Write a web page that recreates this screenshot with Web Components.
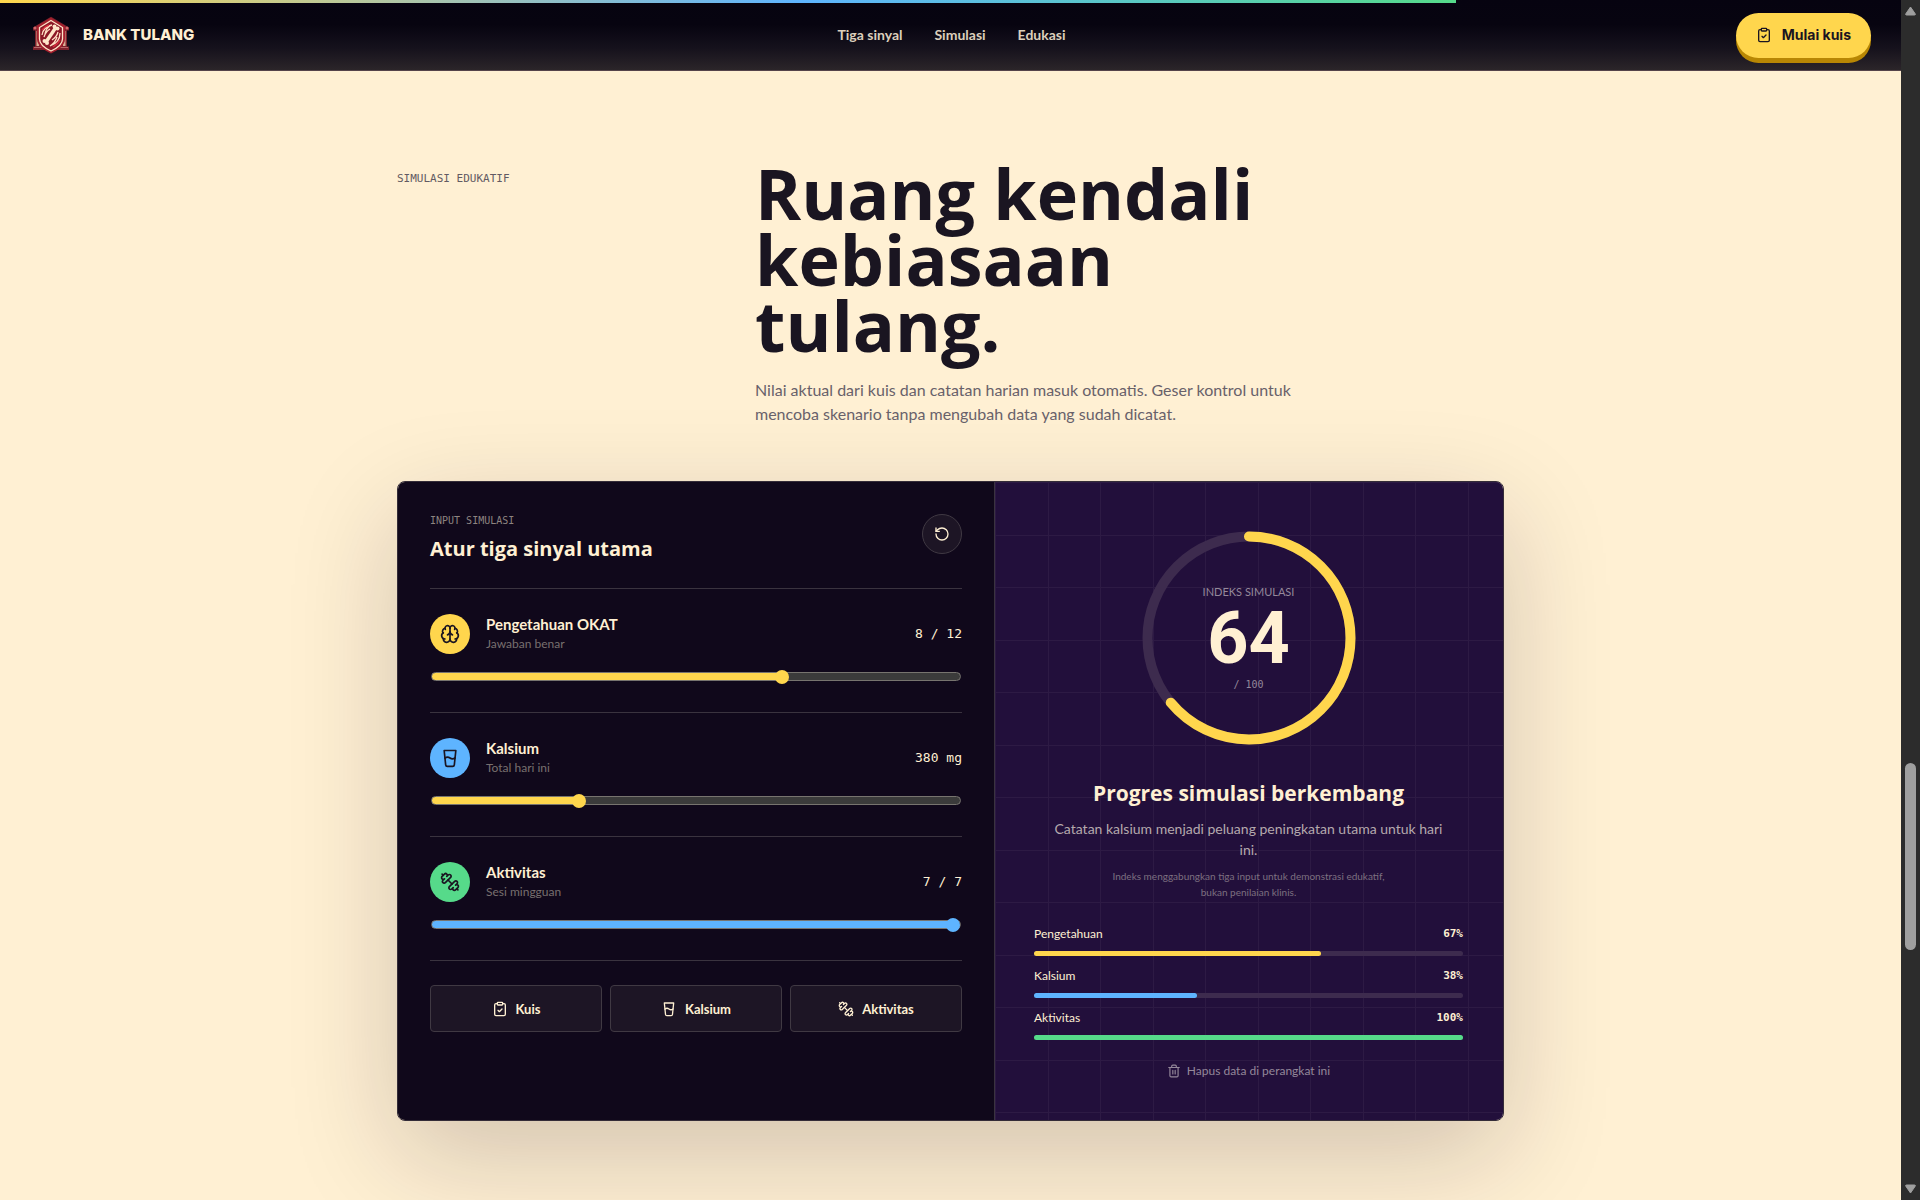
<!DOCTYPE html>
<html lang="id">
<head>
<meta charset="utf-8">
<meta name="viewport" content="width=device-width, initial-scale=1">
<title>Bank Tulang</title>
<style>
  :root {
    --cream: #fff0d3;
    --ink: #1a1521;
    --night: #10081b;
    --plum: #220f3b;
    --yellow: #ffd64d;
    --blue: #5eb4ff;
    --green: #56da8a;
    --line: #3a333f;
    --display: "Open Sans", "Noto Sans", sans-serif;
    --mono: "DejaVu Sans Mono", "Liberation Mono", monospace;
  }
  * { box-sizing: border-box; }
  body {
    margin: 0;
    background: var(--cream);
    color: var(--ink);
    font: 400 14px/20px Lato, "Open Sans", sans-serif;
  }
</style>
</head>
<body>
<bt-shell></bt-shell>

<script>
const ICONS = {
  clipboard: '<rect x="8" y="2" width="8" height="4" rx="1"/><path d="M16 4h2a2 2 0 0 1 2 2v14a2 2 0 0 1-2 2H6a2 2 0 0 1-2-2V6a2 2 0 0 1 2-2h2"/><path d="m9 14 2 2 4-4"/>',
  brain: '<path d="M12 18V5"/><path d="M15 13a4.17 4.17 0 0 1-3-4 4.17 4.17 0 0 1-3 4"/><path d="M17.598 6.5A3 3 0 1 0 12 5a3 3 0 1 0-5.598 1.5"/><path d="M17.997 5.125a4 4 0 0 1 2.526 5.77"/><path d="M18 18a4 4 0 0 0 2-7.464"/><path d="M19.967 17.483A4 4 0 1 1 12 18a4 4 0 1 1-7.967-.517"/><path d="M6 18a4 4 0 0 1-2-7.464"/><path d="M6.003 5.125a4 4 0 0 0-2.526 5.77"/>',
  glass: '<path d="M15.2 22H8.8a2 2 0 0 1-2-1.79L5 3h14l-1.81 17.21A2 2 0 0 1 15.2 22Z"/><path d="M6 12a5 5 0 0 1 6 0 5 5 0 0 0 6 0"/>',
  dumbbell: '<path d="M14.4 14.4 9.6 9.6"/><path d="M18.657 21.485a2 2 0 1 1-2.829-2.828l-1.767 1.768a2 2 0 1 1-2.829-2.829l6.364-6.364a2 2 0 1 1 2.829 2.829l-1.768 1.767a2 2 0 1 1 2.828 2.829z"/><path d="m21.5 21.5-1.4-1.4"/><path d="M3.9 3.9 2.5 2.5"/><path d="M6.404 12.768a2 2 0 1 1-2.829-2.829l1.768-1.767a2 2 0 1 1-2.828-2.829l2.828-2.828a2 2 0 1 1 2.829 2.828l1.767-1.768a2 2 0 1 1 2.829 2.829z"/>',
  reset: '<path d="M3 12a9 9 0 1 0 9-9 9.75 9.75 0 0 0-6.74 2.74L3 8"/><path d="M3 3v5h5"/>',
  trash: '<path d="M3 6h18"/><path d="M19 6v14a2 2 0 0 1-2 2H7a2 2 0 0 1-2-2V6"/><path d="M8 6V4a2 2 0 0 1 2-2h4a2 2 0 0 1 2 2v2"/><path d="M10 11v6M14 11v6"/>'
};

const BASE = '*{box-sizing:border-box}button{font:inherit;color:inherit;margin:0;cursor:pointer}';

class Base extends HTMLElement {
  connectedCallback() {
    if (this.shadowRoot) return;
    this.attachShadow({ mode: 'open' }).innerHTML = '<style>' + BASE + this.styles() + '</style>' + this.markup();
  }
  at(name) { return this.getAttribute(name) || ''; }
  styles() { return ''; }
  markup() { return ''; }
}

customElements.define('bt-icon', class extends Base {
  styles() { return `:host{display:block;flex:none;width:var(--size,16px);height:var(--size,16px)}svg{display:block;width:100%;height:100%}`; }
  markup() {
    return `<svg viewBox="0 0 24 24" fill="none" stroke="currentColor" stroke-width="2" stroke-linecap="round" stroke-linejoin="round" aria-hidden="true">${ICONS[this.at('name')]}</svg>`;
  }
});

customElements.define('bt-logo', class extends Base {
  styles() { return `:host{display:block;flex:none;width:38px;height:38px}svg{display:block}`; }
  markup() {
    return `<svg width="38" height="38" viewBox="0 0 38 38" aria-hidden="true">
      <path d="M1 11.500 19 .8 37 11.500v3h-2v16h2v3.500H1v-3.500h2v-16H1z" fill="#7d222c"/>
      <path d="M4.500 15h2.500v15H4.500zM31 15h2.500v15H31z" fill="#d9ae94"/>
      <path d="M2 31.500h8M28 31.500h8" stroke="#b86668" stroke-width="1.200"/>
      <circle cx="3" cy="12" r="1.500" fill="#d4696c"/><circle cx="35" cy="12" r="1.500" fill="#d4696c"/>
      <path d="M19 1.800 33 10v13c0 6-6 11-14 14.500C11 34 5 29 5 23V10z" fill="#a51f2d"/>
      <path d="M19 4.500 30.500 11.500v11.500c0 5-5 9-11.500 12C12.500 32 7.500 28 7.500 23V11.500z" fill="#8c1826" stroke="#ffe6c9" stroke-width="1.300"/>
      <path d="M14 26 23.500 12" stroke="#ffe6c9" stroke-width="3.500"/>
      <circle cx="22.500" cy="10.500" r="2" fill="#ffe6c9"/><circle cx="25.500" cy="12.500" r="2" fill="#ffe6c9"/>
      <circle cx="12.500" cy="25" r="2" fill="#ffe6c9"/><circle cx="15" cy="27" r="2" fill="#ffe6c9"/>
      <path d="M10 19c1-6 5-9 10-10-5 2-6 5-7 9M12 21c1-4 3-6 6-8M28 17c0 7-4 11-10 13 5-3 6-6 7-9M26 16c-1 4-3 6-6 8" fill="none" stroke="#ffdfc4" stroke-width="1.300"/>
      <path d="M10 14c2-3 4-4 7-5M28 24c-2 4-4 5-7 7" fill="none" stroke="#d52d3c" stroke-width="1.400"/>
    </svg>`;
  }
});

customElements.define('bt-header', class extends Base {
  styles() { return `
    :host{display:block;position:relative}
    header{display:grid;grid-template-columns:1fr auto 1fr;align-items:center;height:71px;padding:0 30px 0 32px;
      background:linear-gradient(#060310 0,#070410 35%,#15111c 68%,#2b2529 100%);border-bottom:1px solid #55434a;color:var(--cream)}
    .progress{position:absolute;left:0;top:0;height:3px;width:76.6%;background:linear-gradient(90deg,var(--yellow),var(--blue) 55%,var(--green))}
    .brand{display:flex;align-items:center;gap:13px;color:inherit;text-decoration:none;font:800 15px/20px Inter,sans-serif}
    nav{display:flex;gap:32px}
    nav a{color:#dccfbc;text-decoration:none;font-weight:700;font-size:14px;line-height:20px}
    .cta{justify-self:end;display:flex;align-items:center;gap:10px;height:45px;padding:0 20px;border:0;border-radius:23px;
      background:var(--yellow);box-shadow:0 5px 0 #b88704;color:var(--ink);font:700 14px/20px Inter,sans-serif}`; }
  markup() { return `
    <header>
      <a class="brand" href="#"><bt-logo></bt-logo><span>BANK TULANG</span></a>
      <nav><a href="#sinyal">Tiga sinyal</a><a href="#simulasi">Simulasi</a><a href="#edukasi">Edukasi</a></nav>
      <button class="cta"><bt-icon name="clipboard"></bt-icon>Mulai kuis</button>
    </header>
    <div class="progress"></div>`; }
});

customElements.define('bt-intro', class extends Base {
  styles() { return `
    :host{display:grid;grid-template-columns:358px 1fr}
    .label{font:400 11px/16px var(--mono);padding-top:11px;color:#625a62}
    ::slotted(h2){margin:0;max-width:540px;font:700 70px/66px var(--display)}
    ::slotted(p){margin:20px 0 0;max-width:544px;font-size:16px;line-height:24px;color:#68616a}`; }
  markup() { return `<div class="label">${this.at('label')}</div><div><slot></slot></div>`; }
});

customElements.define('bt-control', class extends Base {
  styles() {
    const v = (this.at('value') - this.at('min')) / (this.at('max') - this.at('min'));
    return `
    :host{display:block;padding:25px 0;border-bottom:1px solid var(--line)}
    .row{display:flex;align-items:center;gap:16px}
    .dot{display:grid;place-items:center;width:40px;height:40px;border-radius:50%;background:${this.at('tone')};color:var(--ink);--size:20px}
    label{flex:1;display:grid}
    b{font-size:15px;line-height:20px}
    small{font-size:12px;line-height:20px;color:#78706f}
    output{font:400 13px/20px var(--mono);white-space:pre}
    input{appearance:none;display:block;width:calc(100% - 2px);height:22px;margin:11px 1px 0;background:none;--fill:calc(7px + (100% - 14px) * ${v})}
    input::-webkit-slider-runnable-track{height:9px;border:1px solid #77746f;border-radius:5px;
      background:linear-gradient(90deg,${this.at('accent')} var(--fill),#3b3b3b var(--fill))}
    input::-webkit-slider-thumb{appearance:none;width:14px;height:14px;margin-top:-3px;border-radius:50%;background:${this.at('accent')}}`;
  }
  markup() { return `
    <div class="row">
      <span class="dot"><bt-icon name="${this.at('icon')}"></bt-icon></span>
      <label for="r"><b>${this.at('name')}</b><small>${this.at('hint')}</small></label>
      <output for="r">${this.at('shown')}</output>
    </div>
    <input id="r" type="range" min="${this.at('min')}" max="${this.at('max')}" value="${this.at('value')}">`; }
});

customElements.define('bt-action', class extends Base {
  styles() { return `
    :host{display:block;flex:1}
    button{display:flex;align-items:center;justify-content:center;gap:8px;width:100%;height:47px;padding:0;border:1px solid #403943;border-radius:4px;
      background:#1d1525;font-weight:700;font-size:13px;line-height:20px}`; }
  markup() { return `<button><bt-icon name="${this.at('icon')}"></bt-icon><slot></slot></button>`; }
});

customElements.define('bt-ring', class extends Base {
  styles() { return `
    :host{display:grid;place-items:center;width:220px;height:220px}
    svg,.text{grid-area:1/1}
    circle{fill:none;stroke-width:10}
    .text{display:grid;justify-items:center}
    span{font-size:11px;line-height:14px;color:#94889a}
    strong{font:700 72px/80px Roboto,sans-serif}
    small{font:400 10px/12px var(--mono);color:#94889a}`; }
  markup() { return `
    <svg width="220" height="220" viewBox="0 0 220 220" aria-hidden="true">
      <circle cx="110" cy="110" r="101.500" stroke="#3d2b4e"/>
      <circle cx="110" cy="110" r="101.500" stroke="#ffd64d" stroke-linecap="round" pathLength="100" stroke-dasharray="${this.at('value')} 100" transform="rotate(-90 110 110)"/>
    </svg>
    <div class="text"><span>INDEKS SIMULASI</span><strong>${this.at('value')}</strong><small>/ 100</small></div>`; }
});

customElements.define('bt-meter', class extends Base {
  styles() { return `
    :host{display:grid;gap:9px}
    .row{display:flex;justify-content:space-between;font-size:12px;line-height:16px}
    b{font:700 11px/16px var(--mono)}
    .track{height:5px;border-radius:3px;background:#3d2b4e}
    .fill{height:100%;width:${this.at('value')}%;border-radius:3px;background:${this.at('tone')}}`; }
  markup() { return `<div class="row"><span>${this.at('name')}</span><b>${this.at('value')}%</b></div><div class="track"><div class="fill"></div></div>`; }
});

customElements.define('bt-simulator', class extends Base {
  styles() { return `
    :host{display:grid;grid-template-columns:minmax(0,597fr) minmax(0,508fr);margin-top:55px;border:1px solid #342c38;border-radius:8px;overflow:hidden;
      color:var(--cream);box-shadow:0 35px 110px rgba(30,14,36,.2)}
    .inputs{padding:32px 32px 0;background:var(--night);border-right:1px solid var(--line)}
    .head{display:flex;justify-content:space-between;align-items:flex-start;padding-bottom:25px;border-bottom:1px solid var(--line)}
    .eyebrow{font:400 10px/14px var(--mono);color:#8d8480}
    h3{margin:7px 0 0;font:700 20px/28px var(--display)}
    .reset{display:grid;place-items:center;width:40px;height:40px;padding:0;border:1px solid #403943;border-radius:50%;background:#1d1525}
    .actions{display:flex;gap:8px;margin-top:24px}
    .result{display:flex;flex-direction:column;align-items:center;padding:46px 40px 37px 39px;text-align:center;
      background:
        linear-gradient(90deg,transparent 52px,#2d1a44 52px 53px,transparent 53px 104px,#2d1a44 104px) 1px 1px/105px 105px,
        linear-gradient(transparent 52px,#2d1a44 52px 53px,transparent 53px 104px,#2d1a44 104px) 1px 1px/105px 105px,
        var(--plum)}
    .result h3{margin-top:31px;font-size:21px}
    .lead{margin:11px 0 0;max-width:400px;font-size:14px;line-height:21px;color:#b5a9ad}
    .note{margin:8px 0 0;max-width:300px;font-size:10px;line-height:16px;color:#7d7080}
    .meters{display:grid;gap:12px;align-self:stretch;margin-top:26px;text-align:left}
    .clear{display:flex;align-items:center;gap:6px;height:24px;margin-top:19px;padding:0;border:0;background:none;font-size:12px;line-height:16px;color:#94889a;--size:14px}`; }
  markup() { return `
    <section class="inputs">
      <div class="head">
        <div><div class="eyebrow">INPUT SIMULASI</div><h3>Atur tiga sinyal utama</h3></div>
        <button class="reset" aria-label="Atur ulang"><bt-icon name="reset"></bt-icon></button>
      </div>
      <bt-control icon="brain" tone="var(--yellow)" accent="var(--yellow)" name="Pengetahuan OKAT" hint="Jawaban benar" shown="8 / 12" min="0" max="12" value="8"></bt-control>
      <bt-control icon="glass" tone="var(--blue)" accent="var(--yellow)" name="Kalsium" hint="Total hari ini" shown="380 mg" min="0" max="1400" value="380"></bt-control>
      <bt-control icon="dumbbell" tone="var(--green)" accent="var(--blue)" name="Aktivitas" hint="Sesi mingguan" shown="7 / 7" min="0" max="7" value="7"></bt-control>
      <div class="actions">
        <bt-action icon="clipboard">Kuis</bt-action>
        <bt-action icon="glass">Kalsium</bt-action>
        <bt-action icon="dumbbell">Aktivitas</bt-action>
      </div>
    </section>
    <section class="result">
      <bt-ring value="64"></bt-ring>
      <h3>Progres simulasi berkembang</h3>
      <p class="lead">Catatan kalsium menjadi peluang peningkatan utama untuk hari ini.</p>
      <p class="note">Indeks menggabungkan tiga input untuk demonstrasi edukatif, bukan penilaian klinis.</p>
      <div class="meters">
        <bt-meter name="Pengetahuan" value="67" tone="var(--yellow)"></bt-meter>
        <bt-meter name="Kalsium" value="38" tone="var(--blue)"></bt-meter>
        <bt-meter name="Aktivitas" value="100" tone="var(--green)"></bt-meter>
      </div>
      <button class="clear"><bt-icon name="trash"></bt-icon>Hapus data di perangkat ini</button>
    </section>`; }
});

customElements.define('bt-rail', class extends Base {
  styles() { return `
    :host{display:flex;flex-direction:column;align-items:center;height:100%;padding:5px 0;background:#2c2c2c}
    svg{display:block;flex:none}
    .before{flex:747}.thumb{flex:187;width:11px;border-radius:6px;background:#9f9f9f}.after{flex:234}`; }
  markup() { return `
    <svg width="13" height="11" aria-hidden="true"><path d="M6.500 2 11 8.500Q12 10 10.500 10h-8Q1 10 2 8.500z" fill="#9f9f9f" stroke="#9f9f9f" stroke-linejoin="round"/></svg>
    <div class="before"></div><div class="thumb"></div><div class="after"></div>
    <svg width="13" height="11" aria-hidden="true"><path d="M6.500 9 11 2.500Q12 1 10.500 1h-8Q1 1 2 2.500z" fill="#9f9f9f" stroke="#9f9f9f" stroke-linejoin="round"/></svg>`; }
});

customElements.define('bt-shell', class extends Base {
  styles() { return `
    :host{display:grid;grid-template-columns:minmax(0,1fr) 19px;height:100vh;overflow:hidden}
    main{max-width:1107px;margin:0 auto;padding-top:89px}`; }
  markup() { return `
    <div>
      <bt-header></bt-header>
      <main id="simulasi">
        <bt-intro label="SIMULASI EDUKATIF">
          <h2>Ruang kendali kebiasaan tulang.</h2>
          <p>Nilai aktual dari kuis dan catatan harian masuk otomatis. Geser kontrol untuk mencoba skenario tanpa mengubah data yang sudah dicatat.</p>
        </bt-intro>
        <bt-simulator></bt-simulator>
      </main>
    </div>
    <bt-rail></bt-rail>`; }
});
</script>
</body>
</html>
